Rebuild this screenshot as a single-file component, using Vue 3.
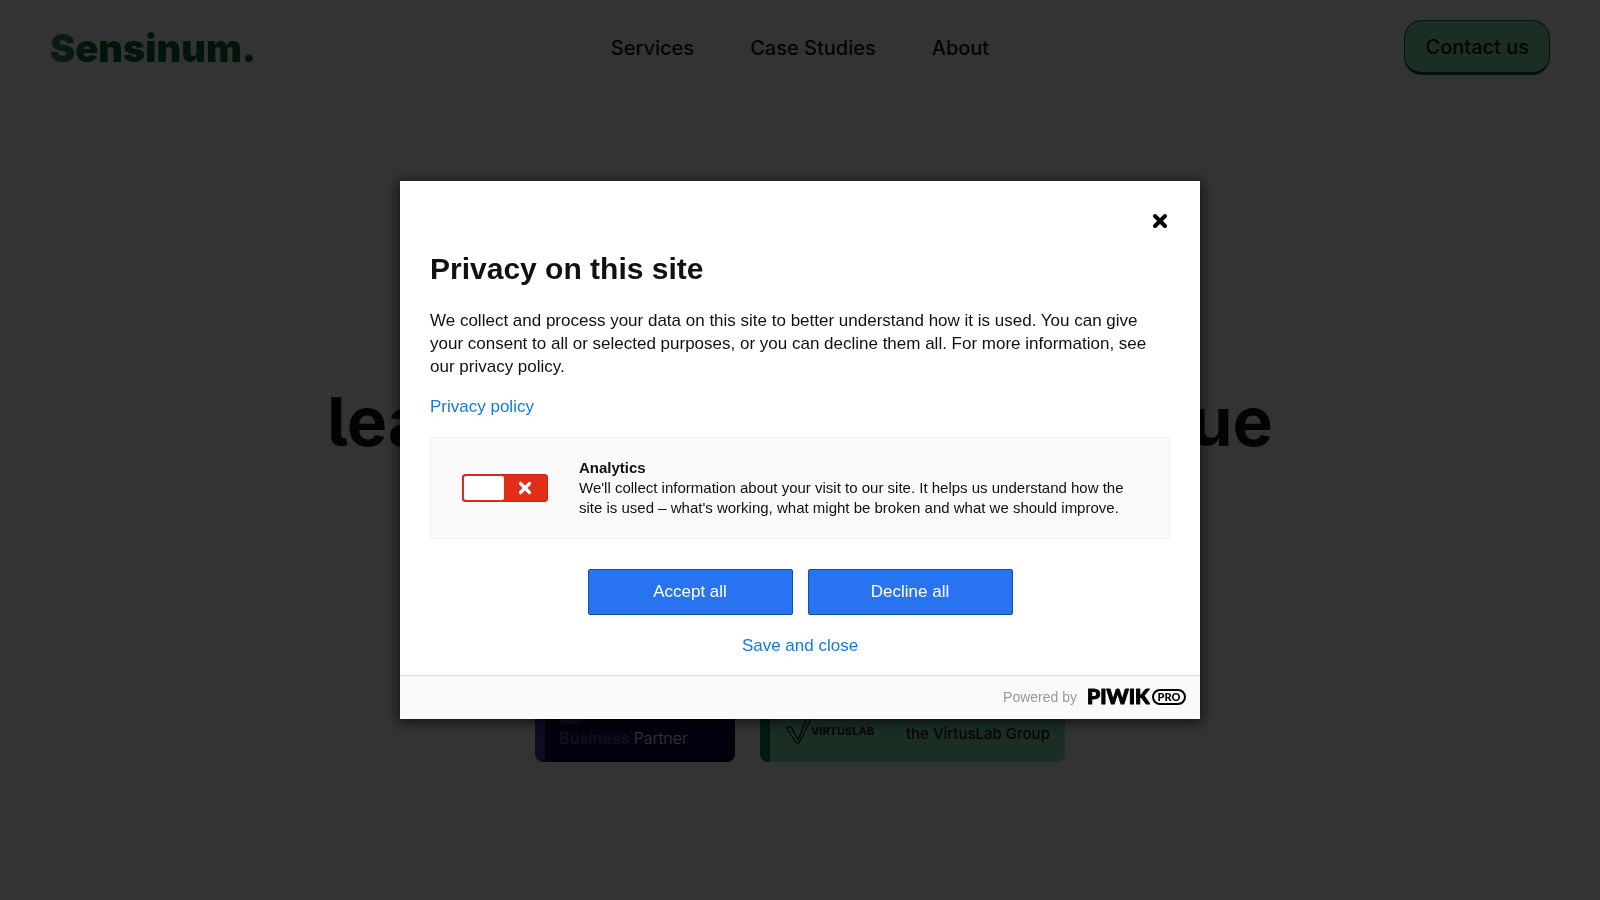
<script setup>
import { ref } from 'vue'

const links = ['Services', 'Case Studies', 'About']
const analytics = ref(false)
</script>

<template>
  <div class="page">
    <header class="header">
      <a class="logo" href="#">Sensinum.</a>
      <nav class="nav" aria-label="Main">
        <a v-for="link in links" :key="link" href="#">{{ link }}</a>
      </nav>
      <a class="contact" href="#">Contact us</a>
    </header>
    <main class="hero">
      <h1 class="headline"><span>lea</span><span>ue</span></h1>
      <div class="badges">
        <div class="badge partner">
          <svg width="24" height="24" viewBox="0 0 24 24" aria-hidden="true">
            <rect width="24" height="24" rx="6" fill="#5038c8" />
          </svg>
          <span class="partner-text"><b>Business</b> Partner</span>
        </div>
        <div class="badge group">
          <span class="virtus">
            <svg width="26" height="26" viewBox="0 0 26 26" aria-hidden="true">
              <path d="M1 9h5l7 13 4-9M1 9l10 16h3L26 1M8 12l5 10L21 2" fill="none" stroke="currentColor" stroke-width="1.2" />
            </svg>
            <b>VIRTUSLAB</b>
          </span>
          <span class="group-text">the VirtusLab Group</span>
        </div>
      </div>
    </main>
  </div>

  <div class="overlay">
    <section class="modal" role="dialog" aria-modal="true" aria-labelledby="privacy-title">
      <div class="content">
        <button class="close" type="button" aria-label="Close">
          <svg width="16" height="16" viewBox="0 0 16 16" aria-hidden="true">
            <path d="M3 3l10 10M13 3L3 13" fill="none" stroke="currentColor" stroke-width="4" stroke-linecap="round" />
            <path d="M2.5 2.5l11 11M13.5 2.5l-11 11" fill="none" stroke="currentColor" stroke-width="3" />
          </svg>
        </button>
        <h2 id="privacy-title">Privacy on this site</h2>
        <p class="intro">
          We collect and process your data on this site to better understand how it is used. You can
          give your consent to all or selected purposes, or you can decline them all. For more
          information, see our privacy policy.
        </p>
        <a class="link policy" href="#">Privacy policy</a>
        <div class="purpose">
          <span class="switch">
            <input id="analytics" v-model="analytics" type="checkbox" />
            <svg width="14" height="14" viewBox="0 0 14 14" aria-hidden="true">
              <path d="M2.5 2.5l9 9M11.5 2.5l-9 9" fill="none" stroke="#fff" stroke-width="3.2" stroke-linecap="round" />
            </svg>
          </span>
          <div class="purpose-text">
            <label for="analytics">Analytics</label>
            <p>
              We'll collect information about your visit to our site. It helps us understand how the
              site is used – what's working, what might be broken and what we should improve.
            </p>
          </div>
        </div>
        <div class="actions">
          <button class="primary" type="button">Accept all</button>
          <button class="primary" type="button">Decline all</button>
        </div>
        <button class="link save" type="button">Save and close</button>
      </div>
      <footer class="footer">
        <span>Powered by</span>
        <svg width="102" height="30" viewBox="-2 -6 102 30" role="img" aria-label="PIWIK PRO">
          <text class="piwik" x="0" y="16">PIWIK</text>
          <rect x="66" y="2" width="32" height="14" rx="7" fill="none" stroke="#000" stroke-width="2" />
          <text class="pro" x="82" y="13" text-anchor="middle">PRO</text>
        </svg>
      </footer>
    </section>
  </div>
</template>

<style>
body {
  margin: 0;
  background: #fff;
}
</style>

<style scoped>
* {
  box-sizing: border-box;
}
.page {
  min-height: 100vh;
  font-family: Inter, "Liberation Sans", sans-serif;
  color: #101010;
}
a {
  color: inherit;
  text-decoration: none;
}
.header {
  display: grid;
  grid-template-columns: 1fr auto 1fr;
  align-items: center;
  padding: 20px 50px;
}
.logo {
  justify-self: start;
  font-size: 38px;
  line-height: 48px;
  font-weight: 900;
  color: transparent;
  background: linear-gradient(100deg, #308860 0, #2c805a 24px, #006830 44px);
  background-clip: text;
}
.nav {
  display: flex;
  gap: 56px;
  font-size: 20px;
  line-height: 24px;
  font-weight: 500;
}
.contact {
  justify-self: end;
  padding: 14px 20px 12px;
  border: 1px solid #08643a;
  border-bottom-width: 3px;
  border-radius: 18px;
  background: #82e6b4;
  font-size: 20px;
  line-height: 25px;
  font-weight: 500;
}
.hero {
  display: flex;
  flex-direction: column;
  align-items: center;
  padding: 285px 20px 40px;
}
.headline {
  display: flex;
  justify-content: space-between;
  width: 100%;
  max-width: 946px;
  margin: 0;
  font-size: 68px;
  line-height: 82px;
  font-weight: 700;
  font-feature-settings: "cv05";
}
.badges {
  display: flex;
  gap: 25px;
  margin-top: 220px;
}
.badge {
  display: flex;
  align-items: flex-end;
  height: 80px;
  border-left: 10px solid;
  border-radius: 8px;
}
.partner {
  flex-direction: column;
  align-items: flex-start;
  justify-content: flex-end;
  gap: 4px;
  width: 200px;
  padding: 0 14px 14px;
  border-color: #483cb0;
  background: #100840;
  color: #fff;
  font-size: 16px;
  line-height: 20px;
  font-weight: 300;
}
.partner b {
  color: #5844c0;
  font-weight: 600;
}
.group {
  gap: 32px;
  padding: 0 15px 18px;
  border-color: #008840;
  background: #82e6b4;
}
.virtus {
  display: flex;
  align-items: center;
  font-size: 11px;
}
.group-text {
  font-size: 15px;
  line-height: 20px;
  font-weight: 500;
}
.overlay {
  position: fixed;
  inset: 0;
  display: flex;
  align-items: center;
  justify-content: center;
  background: rgba(0, 0, 0, 0.8);
  font-family: "Liberation Sans", Arial, sans-serif;
  color: #111;
}
.modal {
  width: 100%;
  max-width: 800px;
  background: #fff;
  box-shadow: 0 2px 12px 2px rgba(0, 0, 0, 0.6);
}
.content {
  display: flex;
  flex-direction: column;
  padding: 30px 30px 18px;
}
button {
  margin: 0;
  padding: 0;
  border: 0;
  background: none;
  font-family: inherit;
  cursor: pointer;
}
.close {
  display: flex;
  align-items: center;
  justify-content: center;
  align-self: flex-end;
  width: 20px;
  height: 20px;
  color: #000;
}
h2 {
  margin: 20px 0 22px;
  font-size: 30px;
  line-height: 36px;
}
.intro {
  margin: 0 0 17px;
  font-size: 17px;
  line-height: 23px;
}
.link {
  font-size: 17px;
  line-height: 23px;
  color: #137ad8;
}
.policy {
  align-self: flex-start;
}
.purpose {
  display: flex;
  align-items: center;
  gap: 31px;
  margin: 19px 0 30px;
  padding: 20px 31px;
  border: 1px solid #efefef;
  background: #fafafa;
}
.switch {
  position: relative;
  flex: none;
  width: 86px;
  height: 28px;
}
.switch input {
  display: block;
  width: 100%;
  height: 100%;
  margin: 0;
  padding: 1px;
  appearance: none;
  border: 1px solid #c42a1c;
  border-radius: 3px;
  background: #e22d18;
  cursor: pointer;
}
.switch input::before {
  content: "";
  display: block;
  width: 40px;
  height: 24px;
  border-radius: 2px;
  background: #fff;
}
.switch svg {
  position: absolute;
  top: 7px;
  left: 56px;
  pointer-events: none;
}
.purpose-text {
  font-size: 15px;
  line-height: 20px;
}
.purpose-text label {
  display: block;
  font-weight: 700;
}
.purpose-text p {
  margin: 0;
}
.actions {
  display: flex;
  justify-content: center;
  gap: 15px;
}
.primary {
  width: 205px;
  height: 46px;
  border: 1px solid #0e4fa8;
  border-radius: 2px;
  background: #2874f0;
  color: #fff;
  font-size: 17px;
}
.save {
  align-self: center;
  margin-top: 19px;
}
.footer {
  display: flex;
  align-items: center;
  justify-content: flex-end;
  gap: 8px;
  height: 44px;
  padding: 0 13px 2px;
  border-top: 1px solid #ddd;
  background: #fafafa;
  color: #999;
  font-size: 14px;
}
.piwik,
.pro {
  font-family: Lato, sans-serif;
  font-weight: 900;
  fill: #000;
}
.piwik {
  font-size: 21px;
  stroke: #000;
  stroke-width: 1;
  stroke-linejoin: round;
}
.pro {
  font-size: 11px;
}
</style>
